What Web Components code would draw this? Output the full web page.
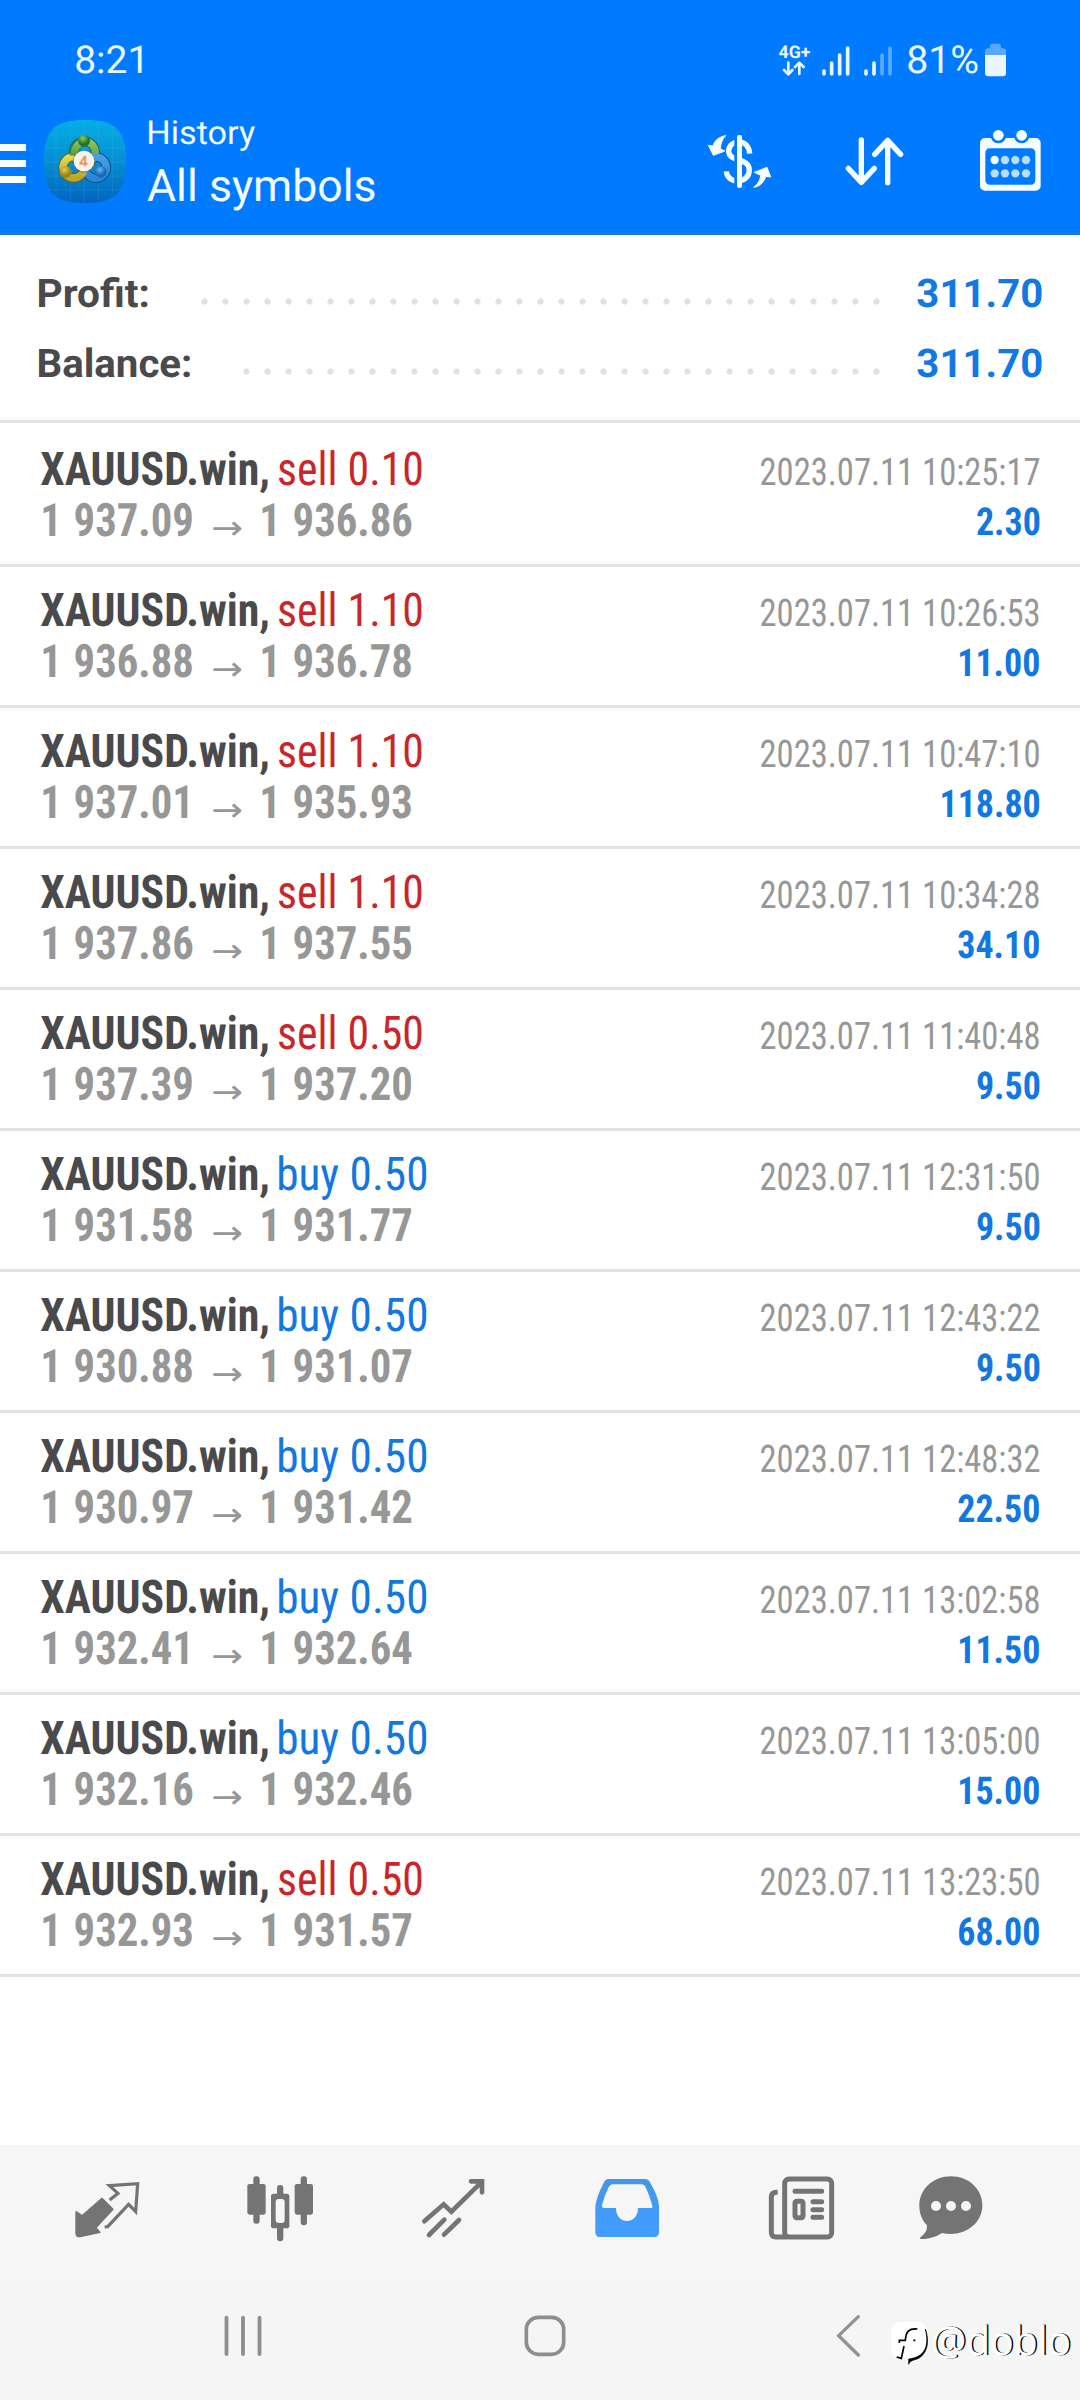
<!DOCTYPE html>
<html lang="en">
<head>
<meta charset="utf-8">
<title>History</title>
<style>
html,body{margin:0;background:#fff}
body{width:1080px;height:2400px;overflow:hidden;font-family:Roboto,sans-serif}
</style>
</head>
<body>
<history-screen></history-screen>
<script>
const pen = document.createElement('canvas').getContext('2d');

/* One line of text whose box is its cap height tall and `w` pixels wide; `ref` sets the text that w is measured on. */
class FitText extends HTMLElement {
  connectedCallback() {
    if (this.shadowRoot) return;
    const a = n => this.getAttribute(n);
    const size = +a('size'), w = +a('w'), weight = a('weight') || 400;
    const fam = a('family') || 'Roboto', cond = this.hasAttribute('cond');
    const right = this.hasAttribute('right');
    const text = this.textContent;
    pen.font = `${weight} ${cond ? 'condensed ' : ''}${size * 10}px "${fam}"`;
    const m = pen.measureText(a('ref') || text);
    const ink = (m.actualBoundingBoxRight + m.actualBoundingBoxLeft) / 10;
    const s = w / ink;
    const shift = (right ? m.width - m.actualBoundingBoxRight : m.actualBoundingBoxLeft) * s / 10;
    this.attachShadow({mode: 'open'}).innerHTML = `<style>
      :host{display:flex;flex:none;justify-content:${right ? 'flex-end' : 'flex-start'};width:${w}px;height:${size * .711}px}
      span{display:block;white-space:pre;flex:none;font:${weight} ${size}px/.711 "${fam}",sans-serif;font-stretch:${cond ? '75%' : '100%'};
      text-rendering:geometricPrecision;transform-origin:${right ? '100%' : '0'} 50%;transform:translate(${shift}px,.5px) scaleX(${s})}
      </style><span></span>`;
    this.shadowRoot.querySelector('span').textContent = text;
  }
}
customElements.define('fit-text', FitText);

const define = (tag, css, html) => customElements.define(tag, class extends HTMLElement {
  connectedCallback() {
    if (this.shadowRoot) return;
    this.attachShadow({mode: 'open'}).innerHTML =
      `<style>*{box-sizing:border-box}${css}</style>` + (typeof html === 'function' ? html(this) : html);
  }
});

define('status-bar', `
:host{display:flex;align-items:flex-start;height:76px;padding:45.5px 74px 0 75.5px;box-sizing:border-box;color:#eaf6ff}
.r{margin-left:auto;display:flex;align-items:flex-start}
.net{width:31px;display:flex;flex-direction:column;gap:2.5px;padding-top:.5px}
svg{display:block;flex:none}
`, `
<fit-text size="38.5" w="65.500">8:21</fit-text>
<div class="r">
 <div class="net"><fit-text size="17.5" w="31" weight="700">4G+</fit-text>
  <svg width="30" height="15" viewBox="297 125 90 45" fill="none" stroke="#eaf6ff" stroke-width="8" stroke-linecap="round" stroke-linejoin="round"><path d="M325 130v34M312 152l13 13 12-13M358 164v-33M345 143l13-13 13 13"/></svg></div>
 <svg style="margin-left:12px" width="28" height="30" viewBox="427 73 84 90" stroke="#eaf6ff" stroke-width="11" stroke-linecap="round"><path d="M433 148v9M456 124v33M480 100v57M504 79v78"/></svg>
 <svg style="margin-left:14px" width="28" height="30" viewBox="552 73 84 90" stroke="#eaf6ff" stroke-width="11" stroke-linecap="round"><path d="M558 148v9M582 124v33"/><path d="M606 100v57M630 79v78" stroke="#59a9ff"/></svg>
 <fit-text style="margin-left:16px" size="38.5" w="70">81%</fit-text>
 <svg style="margin:-3px 0 0 7px" width="21" height="34" viewBox="915 68 63 102"><path d="M915 104V94q0-10 10-10h5v-6q0-8 8-8h17q8 0 8 8v6h5q10 0 10 10v10z" fill="#59a9ff"/><path d="M915 104h63v54q0 10-10 10h-43q-10 0-10-10z" fill="#edf6ff"/></svg>
</div>`);

define('app-logo', `:host{display:block;width:82px;height:83px;flex:none}svg{display:block}`, `
<svg width="82" height="83" viewBox="42 29 246 249">
<defs>
<linearGradient id="bg" x2="0" y2="1"><stop offset="0" stop-color="#04aee6"/><stop offset=".5" stop-color="#078ed2"/><stop offset="1" stop-color="#0363bc"/></linearGradient>
<linearGradient id="g" x2="0" y2="1"><stop offset="0" stop-color="#8fc264"/><stop offset="1" stop-color="#4f9b3a"/></linearGradient>
<linearGradient id="y" x2="0" y2="1"><stop offset="0" stop-color="#e6d84f"/><stop offset="1" stop-color="#bda52a"/></linearGradient>
<linearGradient id="b" x2="0" y2="1"><stop offset="0" stop-color="#4a9fe4"/><stop offset="1" stop-color="#2b84d8"/></linearGradient>
<radialGradient id="gb" cx=".4" cy=".3"><stop offset="0" stop-color="#8fc964"/><stop offset="1" stop-color="#1f7427"/></radialGradient>
<radialGradient id="yb" cx=".4" cy=".3"><stop offset="0" stop-color="#e2d052"/><stop offset="1" stop-color="#9d8513"/></radialGradient>
<radialGradient id="bb" cx=".4" cy=".3"><stop offset="0" stop-color="#6db9f0"/><stop offset="1" stop-color="#1767b4"/></radialGradient>
</defs>
<path d="M165 29C258 29 288 60 288 153S258 278 165 278 42 246 42 153 72 29 165 29z" fill="url(#bg)"/>
<path d="M78 50v206M121 32v243M163 29v249M205 32v243M247 48v210M50 73h230M44 113h242M42 155h246M44 197h242M52 238h226" stroke="#6fd0f5" stroke-opacity=".2" stroke-width="2"/>
<circle cx="163" cy="126" r="33" fill="none" stroke="#1b6350" stroke-width="28"/>
<circle cx="131" cy="171" r="32" fill="none" stroke="#5a6230" stroke-width="28"/>
<circle cx="197" cy="172" r="32" fill="none" stroke="#0a4f88" stroke-width="28"/>
<circle cx="163" cy="126" r="33" fill="none" stroke="url(#g)" stroke-width="22"/>
<circle cx="197" cy="172" r="32" fill="none" stroke="url(#b)" stroke-width="22"/>
<circle cx="131" cy="171" r="32" fill="none" stroke="url(#y)" stroke-width="22"/>
<path d="M131 134q2-34 32-41" fill="none" stroke="#1b6350" stroke-width="26"/>
<path d="M131 136q2-34 32-43" fill="none" stroke="url(#g)" stroke-width="22"/>
<circle cx="162" cy="91" r="18" fill="url(#gb)"/><circle cx="107" cy="185" r="18" fill="url(#yb)"/><circle cx="213" cy="185" r="17" fill="url(#bb)"/>
<circle cx="162" cy="154" r="34" fill="#6f7558" opacity=".6"/><circle cx="162" cy="152" r="31" fill="#f8f3ee"/>
<text x="161" y="168" text-anchor="middle" font-family="Liberation Sans" font-size="44" fill="#ef9357" stroke="#ef9357" stroke-width="2">4</text>
</svg>`);

define('app-bar', `
:host{display:block;height:235px;box-sizing:border-box;background:#007aff;color:#f2fbff;border-bottom:2px solid #2676c4}
.bar{display:flex;align-items:flex-start;height:157px}
.menu{width:26px;display:flex;flex-direction:column;gap:9px;margin:68px 18px 0 0}
.menu i{height:7px;background:#f7fdff}
app-logo{margin-top:44px}
.t{display:flex;flex-direction:column;margin:44.500px 0 0 22.5px;gap:26.5px}
.t :last-child{margin-left:-1.500px}
.acts{display:flex;margin:48px 34px 0 auto;gap:63px}
svg{display:block}
`, `
<status-bar></status-bar>
<div class="bar">
 <div class="menu"><i></i><i></i><i></i></div>
 <app-logo></app-logo>
 <div class="t"><fit-text size="33" w="106">History</fit-text><fit-text size="44.5" w="227.5">All symbols</fit-text></div>
 <div class="acts">
  <svg width="72" height="72" viewBox="72 312 216 216" fill="#f7fdff"><path d="M209 401C206 352 146 358 146 393C146 428 208 411 208 450C208 492 142 495 139 454" fill="none" stroke="#f7fdff" stroke-width="16"/><path d="M167 345v159" stroke="#007aff" stroke-width="8"/><rect x="171" y="345" width="15" height="159" rx="6"/><g stroke="#f7fdff" stroke-width="3" stroke-linejoin="round"><path d="M137 347C118 350 104 360 99 378L85 376L100 406L135 393L121 387C122 368 128 356 137 347zM221 502C232 492 240 484 242 466L223 457L261 442L272 471L257 469C252 487 240 499 221 502z"/></g></svg>
  <svg width="72" height="72" viewBox="480 312 216 216" fill="none" stroke="#f7fdff" stroke-width="16" stroke-linecap="round" stroke-linejoin="round"><path d="M547 360v127M508 445l39 42 39-42M626 488V361M587 403l39-42 39 42"/></svg>
  <svg width="72" height="72" viewBox="882 312 216 216"><path fill="#f7fdff" fill-rule="evenodd" d="M915 354H1067a15 15 0 0 1 15 15V497a15 15 0 0 1-15 15H915a15 15 0 0 1-15-15V369a15 15 0 0 1 15-15zM929 385a13 13 0 0 0-13 13v83a13 13 0 0 0 13 13h124a13 13 0 0 0 13-13v-83a13 13 0 0 0-13-13z"/><circle cx="955" cy="346" r="24" fill="#007aff"/><circle cx="1025" cy="346" r="24" fill="#007aff"/><g fill="#f7fdff"><circle cx="955" cy="346" r="16"/><circle cx="1025" cy="346" r="16"/><circle cx="944" cy="420" r="12.500"/></g><g fill="#b9dcff"><circle cx="975" cy="420" r="12.500"/><circle cx="1006" cy="420" r="12.500"/><circle cx="1038" cy="420" r="12.500"/><circle cx="944" cy="460" r="12.500"/><circle cx="975" cy="460" r="12.500"/><circle cx="1006" cy="460" r="12.500"/><circle cx="1038" cy="460" r="12.500"/></g></svg>
 </div>
</div>`);

define('summary-row', `
:host{display:flex;align-items:flex-start;height:70px;color:#4a4a4d}
.d{margin-left:auto;height:7px;margin-top:19px;background:radial-gradient(circle at 50% 50%,#e1e1e1 2.7px,transparent 3.5px) 0 0/21px 7px repeat-x}
.v{color:#1278e4;margin-left:30px}
`, e => `
<fit-text size="39.500" weight="700" w="${e.getAttribute('w')}">${e.getAttribute('label')}</fit-text>
<div class="d" style="width:${e.getAttribute('dots') * 21}px"></div>
<fit-text class="v" size="39.500" weight="700" w="124.500">${e.getAttribute('value')}</fit-text>`);

define('deal-row', `
:host{display:flex;justify-content:space-between;height:141px;box-sizing:border-box;border-bottom:3px solid #e2e2e2;padding:27.300px 40.5px 0 40.5px}
.l,.a,.b,.r{display:flex}
.l{flex-direction:column;gap:18px}
.r{flex-direction:column;align-items:flex-end;padding-top:6px;gap:22px}
.a{gap:12px;color:#4a4a4d}.b{padding-left:2px;color:#979797;word-spacing:2px}
.ar{margin:10.500px 20.500px 0 22.500px}
.sell{color:#c9262a}.buy{color:#1278e0}.d{color:#979797}.p{color:#1278e0}
`, e => {
  const [side, vol, from, to, time, profit] = e.deal;
  return `<div class="l"><div class="a"><fit-text cond size="46.500" weight="700" w="226.500">XAUUSD.win,</fit-text><fit-text class="${side}" cond size="46.500" ref="${side} 0.50" w="${side === 'buy' ? 147 : 142.5}">${side} ${vol}</fit-text></div>
  <div class="b"><fit-text cond size="46" weight="700" w="147.500" ref="1 937.09">${from}</fit-text><fit-text class="ar" family="DejaVu Sans" size="33" w="28.500">→</fit-text><fit-text cond size="46" weight="700" w="147.500" ref="1 937.09">${to}</fit-text></div></div>
  <div class="r"><fit-text class="d" right cond size="38" w="278.500" ref="2023.07.11 10:25:17">${time}</fit-text><fit-text class="p" right cond size="38.500" weight="700" w="62.500" ref="2.30">${profit}</fit-text></div>`;
});

const deals = [
['sell','0.10','1 937.09','1 936.86','2023.07.11 10:25:17','2.30'],
['sell','1.10','1 936.88','1 936.78','2023.07.11 10:26:53','11.00'],
['sell','1.10','1 937.01','1 935.93','2023.07.11 10:47:10','118.80'],
['sell','1.10','1 937.86','1 937.55','2023.07.11 10:34:28','34.10'],
['sell','0.50','1 937.39','1 937.20','2023.07.11 11:40:48','9.50'],
['buy','0.50','1 931.58','1 931.77','2023.07.11 12:31:50','9.50'],
['buy','0.50','1 930.88','1 931.07','2023.07.11 12:43:22','9.50'],
['buy','0.50','1 930.97','1 931.42','2023.07.11 12:48:32','22.50'],
['buy','0.50','1 932.41','1 932.64','2023.07.11 13:02:58','11.50'],
['buy','0.50','1 932.16','1 932.46','2023.07.11 13:05:00','15.00'],
['sell','0.50','1 932.93','1 931.57','2023.07.11 13:23:50','68.00']];

customElements.define('deal-list', class extends HTMLElement {
  connectedCallback() {
    if (this.shadowRoot) return;
    const root = this.attachShadow({mode: 'open'});
    root.innerHTML = '<style>:host{display:block;padding-top:3px}</style>';
    for (const d of deals) {
      const row = document.createElement('deal-row');
      row.deal = d;
      root.append(row);
    }
  }
});

define('tab-bar', `
:host{display:flex;height:135px;box-sizing:border-box;background:#f6f6f6;padding:28px 0 0 70px;gap:102px}
svg{display:block;flex:none;width:72px;height:72px}
svg:nth-of-type(3){margin-left:-1px}svg:nth-of-type(6){margin-left:-24px}
`, `
<svg viewBox="90 129 216 216"><path d="M186 205l33 33-51 55 12 14-60 13q-12 1-12-10v-65l18 12z" fill="#747474" stroke="#747474" stroke-width="4" stroke-linejoin="round"/><path d="M209 210l25-20-26-23 85-6-6 84-21-22-63 67-9 1" fill="none" stroke="#747474" stroke-width="9.500" stroke-linejoin="miter"/></svg>
<svg viewBox="612 129 216 216" fill="#747474"><rect x="640" y="139" width="19" height="142" rx="9"/><rect x="622" y="162" width="55" height="92" rx="7"/><rect x="711" y="165" width="19" height="169" rx="9"/><rect x="693" y="191" width="55" height="104" rx="8"/><rect x="707" y="207" width="27" height="72" rx="9" fill="#f6f6f6"/><rect x="782" y="139" width="19" height="147" rx="9"/><rect x="764" y="162" width="55" height="92" rx="7"/></svg>
<svg viewBox="1131 129 216 216" fill="none" stroke="#747474" stroke-width="14" stroke-linecap="round"><path d="M1153 274l58-51 23 22 92-90M1293 154h33v33M1213 269l-46 46M1257 270l-45 44"/></svg>
<svg viewBox="93 129 216 216"><defs><linearGradient id="f" x2="0" y2="1"><stop offset="0" stop-color="#4595e6"/><stop offset=".5" stop-color="#429bf8"/><stop offset="1" stop-color="#429dff"/></linearGradient></defs><path fill="url(#f)" fill-rule="evenodd" d="M146 147h108q12 0 17 12 25 42 26 70v78q0 14-14 14H120q-14 0-14-14v-78q3-28 25-70 5-12 15-12zM158 163q-8 0-12 9-13 26-20 53-1 9 7 9h35c0 52 66 52 66 0h38q7 0 5-7-7-27-20-55-4-9-12-9z"/></svg>
<svg viewBox="615 129 216 216" fill="none" stroke="#747474" stroke-width="15"><rect x="674" y="147" width="141" height="174" rx="13"/><path d="M653 187h-4q-15 0-15 15v105q0 14 14 14h34"/><path d="M705 184h80M759 215h26M759 239h26M759 262h26" stroke-linecap="round"/><rect x="705" y="214" width="24" height="49" rx="5"/></svg>
<svg viewBox="1065 129 216 216"><path d="M1173 139c53 0 94 38 94 87 0 61-62 97-121 83-18 11-39 19-64 18q-4-2-1-5c15-12 22-22 19-38-14-14-22-34-22-57 0-50 42-88 95-88z" fill="#747474"/><g fill="#f6f6f6"><circle cx="1128" cy="228" r="15"/><circle cx="1173" cy="228" r="15"/><circle cx="1218" cy="228" r="15"/></g></svg>`);

define('system-nav', `
:host{display:flex;height:120px;box-sizing:border-box;background:#f5f5f5;padding:34px 0 0 222px;position:relative}
svg{display:block;flex:none}
water-mark{position:absolute;left:889px;top:32px}
`, `
<svg width="42" height="44" viewBox="126 132 126 132" stroke="#8e8e8e" stroke-width="11.500" stroke-linecap="round"><path d="M139.500 143v109M189 143v109M238.500 143v109"/></svg>
<svg style="margin-left:259px" width="44" height="44" viewBox="1029 132 132 132" fill="none" stroke="#8e8e8e" stroke-width="11"><rect x="1039" y="142" width="112" height="111" rx="36"/></svg>
<svg style="margin-left:267px" width="28" height="44" viewBox="162 132 84 132" fill="none" stroke="#929292" stroke-width="10" stroke-linecap="round"><path d="M235 140l-59 57 59 58"/></svg>
<water-mark></water-mark>`);

define('water-mark', `
:host{display:flex;align-items:flex-start}
svg{display:block;flex:none}
fit-text{margin:12.500px 0 0 2px;color:#fff;text-shadow:1.5px .8px .6px #000}
`, `
<svg width="42" height="56" viewBox="327 126 126 168"><path d="M362 156h50q28 0 28 26v36q0 44-52 50v16q-12-10-12-18h-14q-28-2-28-28v-54q0-28 28-28z" fill="#fff"/><path d="M436 177c12 50 0 84-50 90v16c6-16 22-11 36-22 22-18 26-50 14-84z" fill="#000" stroke="#000" stroke-width="2"/><path d="M412 177c-26-2-34 8-36 34h-18v8M372 228l-8 37-14-4M400 211h6" fill="none" stroke="#000" stroke-width="5"/></svg>
<fit-text family="Open Sans" size="40" weight="400" w="136">@doblo</fit-text>`);

define('history-screen', `
:host{display:flex;flex-direction:column;width:1080px;height:2400px;background:#fff}
.sum{height:188px;padding:43.500px 38.500px 0 38.500px;border-bottom:3px solid #e2e2e2}
tab-bar{margin-top:auto}
`, `
<app-bar></app-bar>
<div class="sum"><summary-row label="Profit:" w="109" dots="33" value="311.70"></summary-row><summary-row label="Balance:" w="151.500" dots="31" value="311.70"></summary-row></div>
<deal-list></deal-list>
<tab-bar></tab-bar>
<system-nav></system-nav>`);
</script>
</body>
</html>
